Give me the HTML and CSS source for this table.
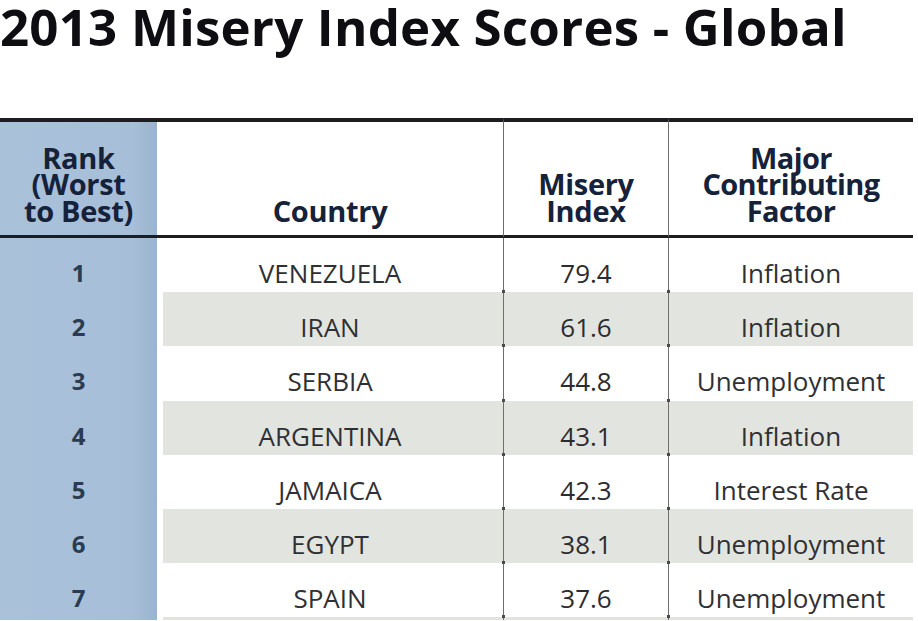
FILE: index.html
```html
<!DOCTYPE html>
<html lang="en">
<head>
<meta charset="utf-8">
<title>2013 Misery Index Scores - Global</title>
<link rel="stylesheet" href="styles.css">
</head>
<body>
<h1 class="title">2013 Misery Index Scores - Global</h1>
<table class="misery">
  <colgroup>
    <col class="c-rank"><col class="c-country"><col class="c-index"><col class="c-factor">
  </colgroup>
  <thead>
    <tr>
      <th class="rank">Rank<br>(Worst<br>to Best)</th>
      <th class="country">Country</th>
      <th class="index">Misery<br>Index</th>
      <th class="factor">Major<br>Contributing<br>Factor</th>
    </tr>
  </thead>
  <tbody>
    <tr><td class="rank">1</td><td class="country">VENEZUELA</td><td class="index">79.4</td><td class="factor">Inflation</td></tr>
    <tr class="alt"><td class="rank">2</td><td class="country">IRAN</td><td class="index">61.6</td><td class="factor">Inflation</td></tr>
    <tr><td class="rank">3</td><td class="country">SERBIA</td><td class="index">44.8</td><td class="factor">Unemployment</td></tr>
    <tr class="alt"><td class="rank">4</td><td class="country">ARGENTINA</td><td class="index">43.1</td><td class="factor">Inflation</td></tr>
    <tr><td class="rank">5</td><td class="country">JAMAICA</td><td class="index">42.3</td><td class="factor">Interest Rate</td></tr>
    <tr class="alt"><td class="rank">6</td><td class="country">EGYPT</td><td class="index">38.1</td><td class="factor">Unemployment</td></tr>
    <tr><td class="rank">7</td><td class="country">SPAIN</td><td class="index">37.6</td><td class="factor">Unemployment</td></tr>
    <tr class="alt filler" aria-hidden="true"><td class="rank"></td><td class="country"></td><td class="index"></td><td class="factor"></td></tr>
  </tbody>
</table>
</body>
</html>
```
FILE: styles.css
```css
html, body {
  margin: 0;
  padding: 0;
  background: #ffffff;
}

body {
  width: 918px;
  height: 621px;
  overflow: hidden;
  font-family: "Open Sans", "Noto Sans", "DejaVu Sans", sans-serif;
}

.title {
  margin: 0;
  padding-top: 1px;
  font-size: 51px;
  line-height: 51px;
  font-weight: 700;
  color: #0e0e12;
  letter-spacing: 0.2px;
  white-space: nowrap;
}

.misery {
  margin-top: 66px;
  width: 913px;
  table-layout: fixed;
  border-collapse: separate;
  border-spacing: 0;
}

.c-rank { width: 157px; }
.c-country { width: 346px; }
.c-index { width: 165px; }
.c-factor { width: 245px; }

.misery th {
  border-top: 4px solid #1d1d1f;
  border-bottom: 3px solid #1d1d1f;
  height: 102px;
  padding: 0 0 11px 0;
  vertical-align: bottom;
  text-align: center;
  font-size: 29px;
  line-height: 26.5px;
  font-weight: 700;
  color: #16223a;
  letter-spacing: -0.3px;
}

.misery th.factor {
  letter-spacing: -0.6px;
}

.misery td {
  height: 32.2px;
  padding: 22px 0 0 0;
  vertical-align: top;
  text-align: center;
  font-size: 26px;
  line-height: 26px;
  font-weight: 400;
  color: #2f3033;
  white-space: nowrap;
}

.misery .rank {
  background: linear-gradient(to right, #a9c1d9 0%, #a6bed7 85%, #9ab4cf 100%);
}

.misery td.rank {
  font-weight: 700;
  color: #2a3b52;
  font-size: 24px;
}

.misery .index,
.misery .factor {
  border-left: 1px solid #6e6e6e;
  position: relative;
}

.misery td.index::before,
.misery td.factor::before {
  content: "";
  position: absolute;
  top: -2px;
  left: -2px;
  width: 3px;
  height: 3px;
  background: #4a4a4a;
}

.misery tbody tr:first-child td.index::before,
.misery tbody tr:first-child td.factor::before {
  display: none;
}

.misery td.index {
  font-weight: 400;
  color: #2b2c2f;
}

.misery .alt td.country {
  background: linear-gradient(to right, #ffffff 6px, #e2e4df 6px);
}

.misery .alt td.index,
.misery .alt td.factor {
  background: #e2e4df;
}

.misery .filler td {
  height: 3px;
  padding: 0;
}
```
